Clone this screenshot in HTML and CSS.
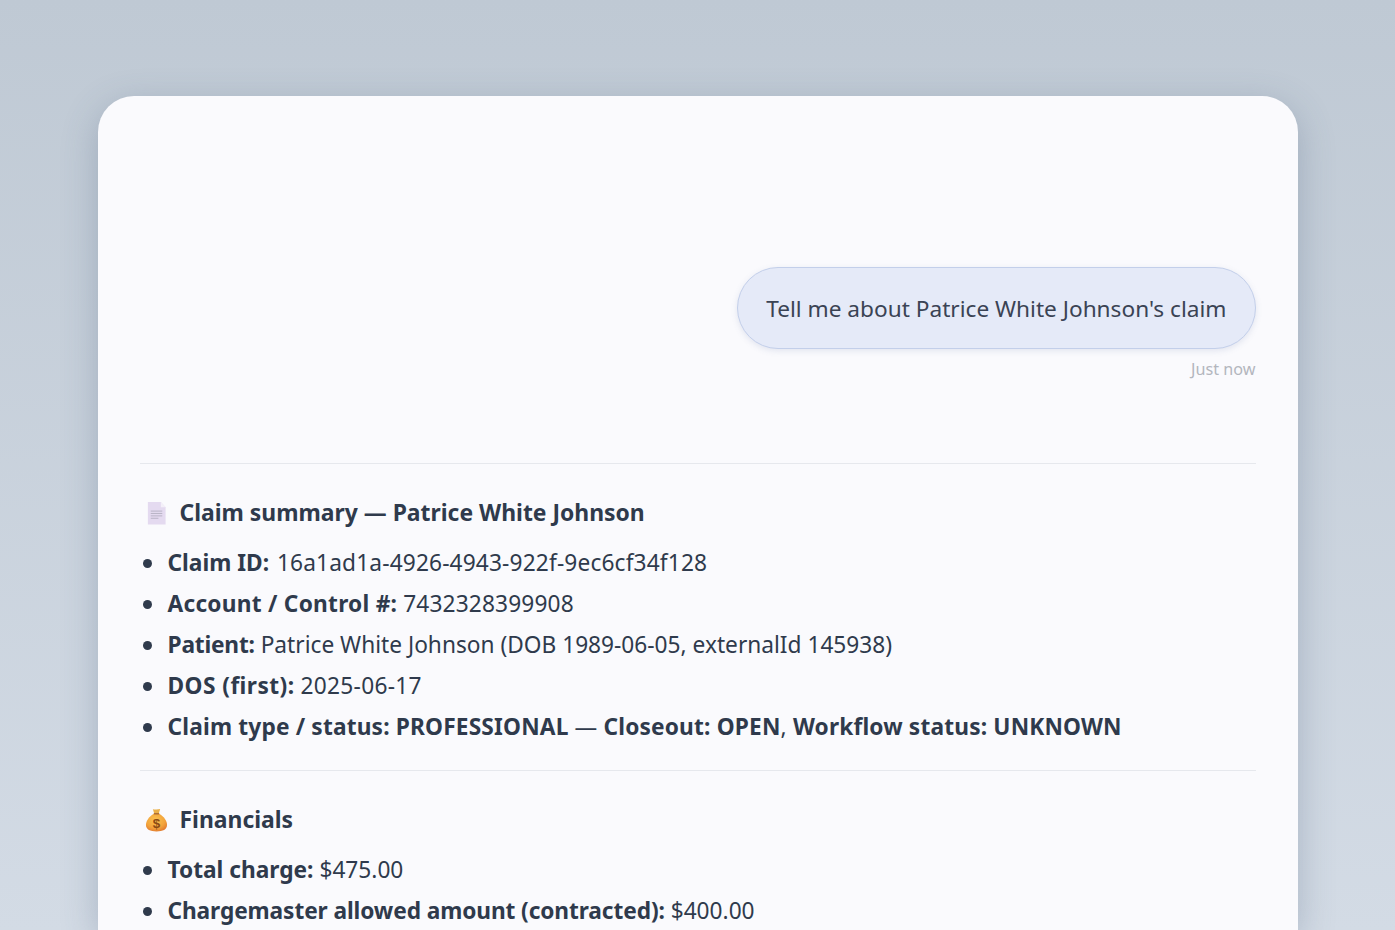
FILE: index.html
```html
<!DOCTYPE html>
<html lang="en">
<head>
<meta charset="utf-8">
<title>Claim chat</title>
<link rel="stylesheet" href="styles.css">
</head>
<body>
<main class="card">
  <section class="user-msg">
    <div class="bubble">Tell me about Patrice White Johnson's claim</div>
    <div class="time">Just now</div>
  </section>
  <hr class="rule">
  <h2 class="heading">
    <svg class="emoji" viewBox="0 0 24 24" aria-hidden="true">
      <path d="M3 .5h13.500l5 5.500v18H3z" fill="#e4daf0"/>
      <path d="M16.500.5l5 5.500h-5z" fill="#f4f0f9"/>
      <path d="M6 10h12M6 12.500h12M6 15h12M6 17.500h8" stroke="#b7b2c4" stroke-width="1"/>
    </svg>
    <span>Claim summary — Patrice White Johnson</span>
  </h2>
  <ul class="list">
    <li><b>Claim ID:</b> <span class="code code-id">16a1ad1a-4926-4943-922f-9ec6cf34f128</span></li>
    <li><b class="label-wide">Account / Control #:</b> <span class="code">7432328399908</span></li>
    <li><b class="label-tight">Patient:</b> Patrice White Johnson (DOB 1989-06-05, externalId 145938)</li>
    <li><b class="label-wider">DOS (first):</b> <span class="code code-date">2025-06-17</span></li>
    <li class="caps"><b>Claim type / status: PROFESSIONAL</b> — <b>Closeout: OPEN</b>, <b>Workflow status: UNKNOWN</b></li>
  </ul>
  <hr class="rule rule-second">
  <h2 class="heading">
    <svg class="emoji" viewBox="0 0 24 24" aria-hidden="true">
      <defs>
        <radialGradient id="bag" cx="45%" cy="35%" r="75%">
          <stop offset="0" stop-color="#fbc24f"/>
          <stop offset=".6" stop-color="#f2a33c"/>
          <stop offset="1" stop-color="#dd6f2b"/>
        </radialGradient>
      </defs>
      <path d="M8.200.5c1.300.9 2.400.5 3.800.5s2.500-.4 3.800-.5L14.500 5h-5z" fill="#eab04a"/>
      <path d="M9.300 5.500h5.400C19.500 8.500 23 12.500 23 17c0 5-4.500 7-11 7S1 22 1 17C1 12.500 4.500 8.500 9.300 5.500z" fill="url(#bag)"/>
      <path d="M9.200 4.800h5.600v1.400H9.200z" fill="#a8642a"/>
      <text x="12" y="20" text-anchor="middle" class="dollar">$</text>
    </svg>
    <span>Financials</span>
  </h2>
  <ul class="list">
    <li><b>Total charge:</b> $475.00</li>
    <li><b class="label-narrow">Chargemaster allowed amount (contracted):</b> $400.00</li>
  </ul>
</main>
</body>
</html>
```
FILE: styles.css
```css
* { box-sizing: border-box; }
html, body { height: 100%; }
body {
  margin: 0;
  height: 930px;
  overflow: hidden;
  padding-top: 96px;
  background: linear-gradient(180deg, #bfc9d4 0%, #d3dbe5 100%);
  font-family: "Noto Sans", "Open Sans", sans-serif;
  color: #2f3a4c;
}
.card {
  width: 1200px;
  height: 834px;
  margin: 0 auto;
  padding: 171px 42px 0;
  overflow: hidden;
  background: #fafafd;
  border-radius: 36px 36px 0 0;
  box-shadow: 0 10px 36px rgba(70, 90, 120, .3);
}
.user-msg { display: flex; flex-direction: column; align-items: flex-end; }
.bubble {
  height: 82px;
  padding: 0 28px;
  display: flex;
  align-items: center;
  font-size: 22.65px;
  color: #3a4354;
  background: #e5eaf8;
  border: 1px solid #c3cfea;
  border-radius: 41px;
  box-shadow: 0 2px 6px rgba(90, 110, 160, .15);
}
.time { margin-top: 10px; font-size: 16.2px; line-height: 21px; color: #b3b6bd; }
.rule { margin: 83px 0 0; border: 0; border-top: 1px solid #e6e8ed; }
.rule-second { margin-top: 23px; }
.heading {
  display: flex;
  align-items: center;
  gap: 12px;
  margin: 32px 0 0 5px;
  font-size: 22.9px;
  line-height: 34px;
  font-weight: 700;
  color: #2f3a4c;
}
.emoji { width: 23px; height: 24px; flex: none; }
.dollar { font: 700 14px "Liberation Sans", sans-serif; fill: #8a4a14; }
.list { margin: 12px 0 0; padding: 0 0 0 28px; list-style: none; font-size: 22.7px; line-height: 41px; }
.list li::before {
  content: "";
  display: inline-block;
  width: 9px;
  height: 9px;
  margin: 0 15.5px 0 -24.5px;
  border-radius: 50%;
  background: #2f3a4c;
  vertical-align: 3px;
}
.list b { font-weight: 700; }
.code { letter-spacing: .15px; }
.code-id { margin-left: 2px; }
.code-date { letter-spacing: .3px; }
.caps { letter-spacing: .17px; }
.label-wide { letter-spacing: .25px; }
.label-wider { letter-spacing: .45px; }
.label-tight { letter-spacing: -.2px; }
.label-narrow { letter-spacing: -.1px; }
```
